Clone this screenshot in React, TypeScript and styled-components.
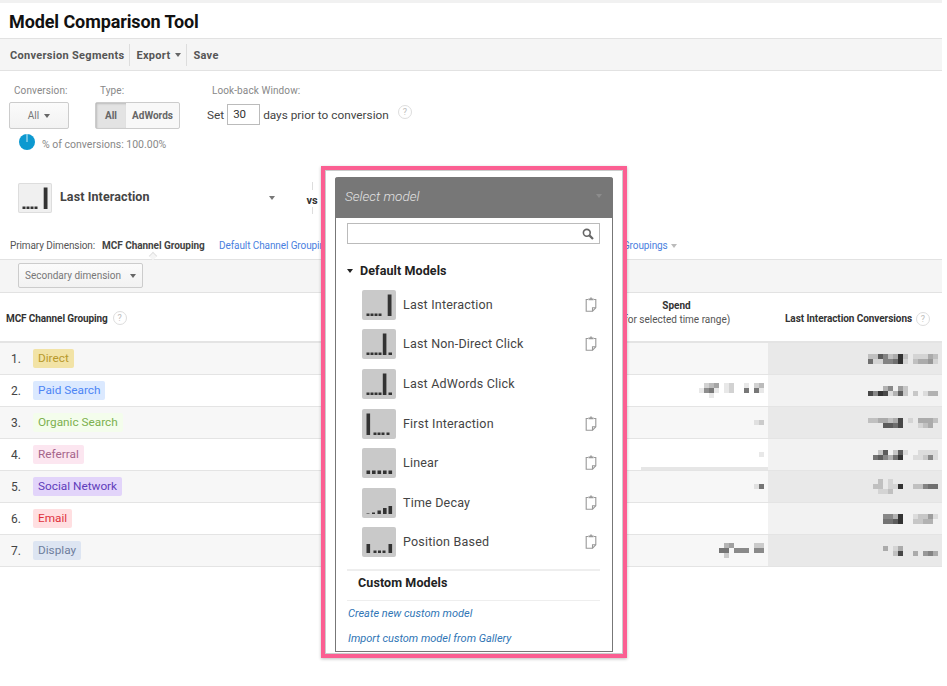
import React from "react";
import styled, { createGlobalStyle } from "styled-components";

const GlobalStyle = createGlobalStyle`
  html, body { margin: 0; padding: 0; background: #fff; }
  body { font-family: Roboto, "Liberation Sans", sans-serif; color: #333; }
`;

type Bar = [number, number, number];

const DOTS = (xs: number[]): Bar[] => xs.map((x) => [x, 3, 2.5]);
const MODELS: { name: string; bars: Bar[]; copy: boolean; height: number }[] = [
  { name: "Last Interaction", copy: true, height: 39, bars: [...DOTS([4.5, 8.5, 12.5, 16.5]), [25.7, 3.8, 21.5]] },
  { name: "Last Non-Direct Click", copy: true, height: 40, bars: [...DOTS([4.5, 8.5, 12.5, 16.5]), [20.8, 3.6, 21.5], [26.5, 3.5, 2.5]] },
  { name: "Last AdWords Click", copy: false, height: 40, bars: [...DOTS([4.5, 8.5, 12.5, 16.5]), [20.8, 3.6, 21.5], [26.5, 3.5, 2.5]] },
  { name: "First Interaction", copy: true, height: 39, bars: [[4.5, 3.6, 21.5], ...DOTS([11.5, 15.5, 19.5, 24.5])] },
  { name: "Linear", copy: true, height: 40, bars: [[4.5, 3.6, 3.5], [10, 3.6, 3.5], [15.5, 3.6, 3.5], [21, 3.6, 3.5], [26.5, 3.6, 3.5]] },
  { name: "Time Decay", copy: true, height: 39, bars: [[4.5, 3, 1], [10, 3, 1.5], [15.5, 3.4, 3.5], [21, 3.6, 6], [26.5, 3.6, 8]] },
  { name: "Position Based", copy: true, height: 42, bars: [[4.5, 3.6, 9], ...DOTS([11.5, 16, 20.5]), [26.5, 3.6, 9]] },
];

const CHANNELS = [
  { name: "Direct", bg: "#f2e3a6", fg: "#b8992b" },
  { name: "Paid Search", bg: "#dbe9ff", fg: "#4d85f5" },
  { name: "Organic Search", bg: "#f4fdec", fg: "#7cb04e" },
  { name: "Referral", bg: "#fce6f0", fg: "#a5648a" },
  { name: "Social Network", bg: "#e2d4fa", fg: "#5f3dbb" },
  { name: "Email", bg: "#ffdfe1", fg: "#e0313d" },
  { name: "Display", bg: "#dde5f2", fg: "#6f7e9d" },
];

// obscured figures from the screenshot, one digit per 5px cell (0 = empty, 9 = darkest)
const SPEND: string[][] = [
  [],
  ["0234012001023", "1561012006061", "0010000000000"],
  ["12"],
  ["1"],
  ["16"],
  [],
  ["034000022", "660555055", "020000000"],
];
const CONV: string[][] = [
  ["227523920111320", "611556910233410"],
  ["000350420000000", "859813720201330"],
  ["223323801033320", "000776800012300"],
  ["002702710011110", "067536900112510"],
  ["002010000000000", "022011900225660", "001120000000000"],
  ["000553900122410", "000667900223300"],
  ["000301300000000", "000002800304530"],
];

const PixelBlur = ({ rows }: { rows: string[] }) => (
  <svg width={rows[0].length * 5} height={rows.length * 5} style={{ display: "block" }}>
    {rows.map((row, y) =>
      row.split("").map((c, x) =>
        c === "0" ? null : (
          <rect key={`${x}-${y}`} x={x * 5} y={y * 5} width={5} height={5} fill={`rgba(30,30,30,${Number(c) / 10})`} />
        ),
      ),
    )}
  </svg>
);

const ModelIcon = ({ bars, size = "small" }: { bars: Bar[]; size?: string }) => (
  <IconBox $size={size}>
    <svg viewBox="0 0 34 30" width="100%" height="100%">
      {bars.map(([x, w, h], i) => (
        <rect key={i} x={x} y={26 - h} width={w} height={h} fill={h === 1 ? "#777" : "#333"} />
      ))}
    </svg>
  </IconBox>
);

const Caret = styled.span<{ $color?: string }>`
  display: inline-block;
  width: 0;
  height: 0;
  border-left: 3.5px solid transparent;
  border-right: 3.5px solid transparent;
  border-top: 4px solid ${(p) => p.$color || "#666"};
`;

const Page = styled.div`
  width: 942px;
  height: 686px;
  position: relative;
  overflow: hidden;
  border-top: 3px solid #f1f1f1;
  box-sizing: border-box;
`;

const Title = styled.h1`
  margin: 0;
  height: 35px;
  padding: 0 0 0 9px;
  font-size: 18px;
  line-height: 38px;
  font-weight: 700;
  letter-spacing: -0.1px;
  color: #111;
  white-space: nowrap;
`;

const Toolbar = styled.div`
  height: 33px;
  box-sizing: border-box;
  display: flex;
  align-items: center;
  background: #f5f5f5;
  border-top: 1px solid #e2e2e2;
  border-bottom: 1px solid #e2e2e2;
  padding: 1px 0 0 10px;
`;

const ToolItem = styled.div<{ $sep?: boolean }>`
  display: flex;
  align-items: center;
  gap: 5px;
  height: 22px;
  font-size: 11px;
  font-weight: 700;
  letter-spacing: 0.3px;
  color: #555;
  ${(p) => p.$sep && "border-left: 1px solid #ddd; margin-left: 5px; padding-left: 6px;"}
`;

const Filters = styled.div`
  display: flex;
  padding: 14px 0 0 9px;
  height: 59px;
  box-sizing: border-box;
`;

const FilterGroup = styled.div<{ $width: number }>`
  width: ${(p) => p.$width}px;
  flex: none;
`;

const FilterLabel = styled.div`
  font-size: 10px;
  line-height: 12px;
  height: 17px;
  color: #888;
  letter-spacing: 0.1px;
  padding-left: 5px;
`;

const GrayButton = styled.button<{ $width: number }>`
  width: ${(p) => p.$width}px;
  height: 27px;
  padding: 0;
  box-sizing: border-box;
  display: inline-flex;
  align-items: center;
  justify-content: center;
  gap: 5px;
  font-family: inherit;
  font-size: 10px;
  color: #777;
  background: linear-gradient(#fbfbfb, #f2f2f2);
  border: 1px solid #ccc;
  border-radius: 2px;
`;

const Toggle = styled.div`
  display: flex;
  width: 85px;
  height: 27px;
  box-sizing: border-box;
  border: 1px solid #ccc;
  border-radius: 2px;
  background: #f8f8f8;
`;

const ToggleOption = styled.div<{ $on?: boolean }>`
  display: flex;
  align-items: center;
  justify-content: center;
  font-size: 10px;
  font-weight: 700;
  color: #666;
  ${(p) =>
    p.$on
      ? "width: 30px; background: #e3e3e3; box-shadow: inset 1px 1px 2px #bbb;"
      : "flex: 1;"}
`;

const SetRow = styled.div`
  display: flex;
  align-items: center;
  margin-top: -1px;
  height: 27px;
  font-size: 11.8px;
  color: #444;
  gap: 3px;
`;

const DaysInput = styled.div`
  width: 33px;
  height: 21px;
  box-sizing: border-box;
  border: 1px solid #bbb;
  padding-left: 5px;
  font-size: 11.5px;
  line-height: 19px;
  color: #333;
`;

const Help = styled.span<{ $left?: number }>`
  display: inline-block;
  width: 14px;
  height: 14px;
  box-sizing: border-box;
  border: 1px solid #ddd;
  border-radius: 50%;
  margin-left: ${(p) => p.$left ?? 0}px;
  text-align: center;
  font-size: 9px;
  font-weight: 400;
  letter-spacing: 0;
  line-height: 12px;
  color: #bbb;
`;

const RaisedHelp = styled(Help)`
  margin-top: -6px;
`;

const Percent = styled.div`
  display: flex;
  align-items: center;
  gap: 7px;
  height: 16px;
  padding-left: 19px;
  margin-top: 4px;
  font-size: 10.5px;
  color: #888;

  span { margin-top: 4px; }
`;

const ModelRow = styled.div`
  display: flex;
  align-items: center;
  height: 30px;
  margin-top: 33px;
  padding-left: 18px;
`;

const IconBox = styled.div<{ $size: string }>`
  flex: none;
  width: 34px;
  height: 30px;
  border-radius: 2px;
  background: ${(p) => (p.$size === "large" ? "#f0f0f0" : "#c9c9c9")};
  ${(p) => p.$size === "large" && "box-shadow: inset 0 0 0 1px #ddd;"}
`;

const ModelName = styled.div`
  width: 209px;
  margin: -4px 0 0 8px;
  font-size: 12.5px;
  font-weight: 700;
  letter-spacing: 0.1px;
  color: #444;
`;

const VsColumn = styled.div`
  display: flex;
  flex-direction: column;
  align-items: center;
  width: 12px;
  height: 32px;
  margin-left: 31px;
  font-size: 11px;
  line-height: 12px;
  font-weight: 700;
  color: #333;

  &::before, &::after {
    content: "";
    flex: 1;
    width: 1px;
    background: #ddd;
  }
  &::before { margin-bottom: 5px; }
`;

const DimensionRow = styled.div`
  position: relative;
  display: flex;
  align-items: center;
  height: 30px;
  margin-top: 17px;
  padding: 2px 0 0 10px;
  border-bottom: 1px solid #e2e2e2;
  box-sizing: border-box;
  font-size: 10px;
  letter-spacing: -0.1px;
  color: #555;
`;

const CurrentDim = styled.span`
  margin-left: 7px;
  width: 117px;
  font-weight: 700;
  letter-spacing: -0.05px;
  color: #444;
  white-space: nowrap;
`;

const DimLink = styled.span<{ $left?: number }>`
  color: #4a7fe0;
  white-space: nowrap;
  margin-left: ${(p) => p.$left ?? 0}px;
  display: inline-flex;
  align-items: center;
  gap: 3px;
`;

const Notch = styled.span`
  position: absolute;
  left: 150px;
  bottom: -1px;
  width: 5px;
  height: 5px;
  background: #f5f5f5;
  border-top: 1px solid #e2e2e2;
  border-left: 1px solid #e2e2e2;
  transform: translateY(-1px) rotate(45deg);
`;

const SecondaryBar = styled.div`
  height: 33px;
  box-sizing: border-box;
  background: #f5f5f5;
  border-bottom: 1px solid #e2e2e2;
  padding: 3px 0 0 18px;
`;

const SecondaryButton = styled.button`
  width: 125px;
  height: 25px;
  padding: 0;
  box-sizing: border-box;
  display: flex;
  align-items: center;
  justify-content: center;
  gap: 9px;
  font-family: inherit;
  font-size: 10px;
  color: #777;
  background: linear-gradient(#fbfbfb, #f2f2f2);
  border: 1px solid #ccc;
  border-radius: 2px;
`;

const TableHead = styled.div`
  display: flex;
  height: 50px;
  box-sizing: border-box;
  border-bottom: 2px solid #e4e4e4;
`;

const HeadMain = styled.div`
  width: 641px;
  flex: none;
  display: flex;
  align-items: center;
  padding: 2px 0 0 6px;
  box-sizing: border-box;
  font-size: 10px;
  font-weight: 700;
  letter-spacing: -0.1px;
  color: #333;
`;

const HeadSpend = styled.div`
  width: 127px;
  flex: none;
  margin-left: -29px;
  padding-top: 6px;
  text-align: center;
  font-size: 10px;
  line-height: 14px;
  white-space: nowrap;
  color: #555;

  b { display: block; color: #333; margin-left: 2px; }
`;

const HeadConv = styled.div`
  flex: 1;
  display: flex;
  align-items: center;
  justify-content: flex-end;
  padding: 3px 12px 0 0;
  font-size: 10px;
  font-weight: 700;
  letter-spacing: -0.07px;
  white-space: nowrap;
  color: #333;
`;

const Row = styled.div<{ $odd: boolean }>`
  display: flex;
  height: 32px;
  box-sizing: border-box;
  border-bottom: 1px solid #e4e4e4;
  background: ${(p) => (p.$odd ? "#f7f7f7" : "#fff")};
`;

const LabelCell = styled.div`
  width: 641px;
  flex: none;
  display: flex;
  align-items: center;
  padding-left: 11px;
  box-sizing: border-box;
  font-size: 12px;
  color: #444;
`;

const Index = styled.span`
  width: 22px;
`;

const Tag = styled.span<{ $bg: string; $fg: string }>`
  height: 19px;
  line-height: 18px;
  padding: 0 5px;
  border-radius: 2px;
  font-size: 11.8px;
  background: ${(p) => p.$bg};
  color: ${(p) => p.$fg};
`;

const SpendCell = styled.div<{ $band?: boolean }>`
  width: 127px;
  flex: none;
  display: flex;
  align-items: center;
  justify-content: flex-end;
  padding-right: 4px;
  box-sizing: border-box;
  ${(p) => p.$band && "border-bottom: 3px solid #e6e6e6; padding-top: 3px;"}
`;

const ConvCell = styled.div<{ $odd: boolean }>`
  flex: 1;
  display: flex;
  align-items: center;
  justify-content: flex-end;
  overflow: hidden;
  background: ${(p) => (p.$odd ? "#e9e9e9" : "#f2f2f2")};

  svg { flex: none; margin-right: -1px; }
`;

const Overlay = styled.div`
  position: absolute;
  left: 321px;
  top: 163px;
  width: 306px;
  height: 492px;
  box-sizing: border-box;
  border: 4px solid #fb5f92;
  background: #fff;
  padding: 7px 10px 2px;
  box-shadow: inset 0 0 0 1px #ccc, 0 1px 3px rgba(0, 0, 0, 0.25);
`;

const Dropdown = styled.div`
  height: 475px;
  box-sizing: border-box;
  border: 1px solid #777;
  border-top: 0;
  border-radius: 3px 3px 0 0;
  background: #fff;
`;

const DropHead = styled.div`
  height: 41px;
  margin: 0 -1px;
  display: flex;
  align-items: center;
  justify-content: space-between;
  padding: 0 11px 4px 10px;
  box-sizing: border-box;
  background: #777;
  border-radius: 3px 3px 0 0;
  font-size: 13.5px;
  font-style: italic;
  font-weight: 300;
  color: #e2e2e2;
`;

const DropBody = styled.div`
  padding: 5px 12px 0 11px;
`;

const SearchBox = styled.div`
  height: 21px;
  box-sizing: border-box;
  border: 1px solid #bbb;
  display: flex;
  align-items: center;
  justify-content: flex-end;
  padding-right: 5px;
`;

const GroupTitle = styled.div`
  display: flex;
  align-items: center;
  gap: 7px;
  height: 17px;
  margin-top: 18px;
  font-size: 12.5px;
  font-weight: 700;
  color: #222;
  letter-spacing: 0.1px;
`;

const ModelList = styled.div`
  margin-top: 11px;
`;

const ModelItem = styled.div<{ $height: number }>`
  display: flex;
  align-items: flex-start;
  height: ${(p) => p.$height}px;
  padding-left: 15px;
`;

const ItemName = styled.div`
  flex: 1;
  margin-left: 7px;
  line-height: 30px;
  font-size: 12.5px;
  letter-spacing: 0.2px;
  color: #444;
`;

const CopyIcon = styled.svg`
  flex: none;
  margin: 7px 3px 0 0;
`;

const Rule = styled.div<{ $strong?: boolean }>`
  height: ${(p) => (p.$strong ? 2 : 1)}px;
  background: #eee;
`;

const CustomTitle = styled.div`
  height: 29px;
  padding-left: 11px;
  line-height: 23px;
  font-size: 12.5px;
  font-weight: 700;
  letter-spacing: 0.1px;
  color: #222;
`;

const CustomLink = styled.a`
  display: block;
  height: 25px;
  padding-left: 1px;
  line-height: 25px;
  font-size: 11px;
  font-style: italic;
  color: #2f75b5;
`;

const Clipboard = () => (
  <CopyIcon width="12" height="15" viewBox="0 0 12 15" fill="none" stroke="#999" strokeWidth="1.1">
    <path d="M3 2.5H1.2v11.8h6.3l3.3-3.6V2.5H9" />
    <path d="M7.5 14.3v-3.6h3.3" />
    <path d="M3.4 3.2V1.4h1.8V.6h1.6v.8h1.8v1.8z" fill="#999" stroke="none" />
  </CopyIcon>
);

const App = () => {
  return (
    <>
      <GlobalStyle />
      <Page>
        <Title>Model Comparison Tool</Title>
        <Toolbar>
          <ToolItem>Conversion Segments</ToolItem>
          <ToolItem $sep>Export <Caret /></ToolItem>
          <ToolItem $sep>Save</ToolItem>
        </Toolbar>
        <Filters>
          <FilterGroup $width={86}>
            <FilterLabel>Conversion:</FilterLabel>
            <GrayButton $width={60}>All <Caret /></GrayButton>
          </FilterGroup>
          <FilterGroup $width={112}>
            <FilterLabel>Type:</FilterLabel>
            <Toggle>
              <ToggleOption $on>All</ToggleOption>
              <ToggleOption>AdWords</ToggleOption>
            </Toggle>
          </FilterGroup>
          <FilterGroup $width={240}>
            <FilterLabel>Look-back Window:</FilterLabel>
            <SetRow>
              Set <DaysInput>30</DaysInput> days prior to conversion
              <RaisedHelp $left={6}>?</RaisedHelp>
            </SetRow>
          </FilterGroup>
        </Filters>
        <Percent>
          <svg width="16" height="16" viewBox="0 0 16 16">
            <circle cx="8" cy="8" r="8" fill="#0d99d0" />
            <path d="M8 0v8" stroke="#fff" strokeWidth="0.8" />
          </svg>
          <span>% of conversions: 100.00%</span>
        </Percent>
        <ModelRow>
          <ModelIcon size="large" bars={MODELS[0].bars} />
          <ModelName>Last Interaction</ModelName>
          <Caret $color="#777" />
          <VsColumn>vs</VsColumn>
        </ModelRow>
        <DimensionRow>
          Primary Dimension:
          <CurrentDim>MCF Channel Grouping</CurrentDim>
          <DimLink>Default Channel Grouping</DimLink>
          <DimLink $left={218}>Custom Channel Groupings <Caret $color="#bbb" /></DimLink>
          <Notch />
        </DimensionRow>
        <SecondaryBar>
          <SecondaryButton>Secondary dimension <Caret /></SecondaryButton>
        </SecondaryBar>
        <TableHead>
          <HeadMain>MCF Channel Grouping<Help $left={5}>?</Help></HeadMain>
          <HeadSpend>
            <b>Spend</b>
            (for selected time range)
          </HeadSpend>
          <HeadConv>Last Interaction Conversions<Help $left={4}>?</Help></HeadConv>
        </TableHead>
        {CHANNELS.map((c, i) => (
          <Row key={c.name} $odd={i % 2 === 0}>
            <LabelCell>
              <Index>{i + 1}.</Index>
              <Tag $bg={c.bg} $fg={c.fg}>{c.name}</Tag>
            </LabelCell>
            <SpendCell $band={i === 3}>
              {SPEND[i].length > 0 && <PixelBlur rows={SPEND[i]} />}
            </SpendCell>
            <ConvCell $odd={i % 2 === 0}>
              <PixelBlur rows={CONV[i]} />
            </ConvCell>
          </Row>
        ))}
        <Overlay>
          <Dropdown>
            <DropHead>
              Select model
              <Caret $color="#8c8c8c" />
            </DropHead>
            <DropBody>
              <SearchBox>
                <svg width="12" height="12" viewBox="0 0 12 12" fill="none" stroke="#666" strokeWidth="1.6">
                  <circle cx="4.8" cy="4.8" r="3.4" />
                  <path d="M7.4 7.4l3.6 3.6" strokeWidth="2.2" />
                </svg>
              </SearchBox>
              <GroupTitle><Caret $color="#222" />Default Models</GroupTitle>
              <ModelList>
                {MODELS.map((m) => (
                  <ModelItem key={m.name} $height={m.height}>
                    <ModelIcon bars={m.bars} />
                    <ItemName>{m.name}</ItemName>
                    {m.copy && <Clipboard />}
                  </ModelItem>
                ))}
              </ModelList>
              <Rule $strong />
              <CustomTitle>Custom Models</CustomTitle>
              <Rule />
              <CustomLink>Create new custom model</CustomLink>
              <CustomLink>Import custom model from Gallery</CustomLink>
            </DropBody>
          </Dropdown>
        </Overlay>
      </Page>
    </>
  );
};

export default App;
